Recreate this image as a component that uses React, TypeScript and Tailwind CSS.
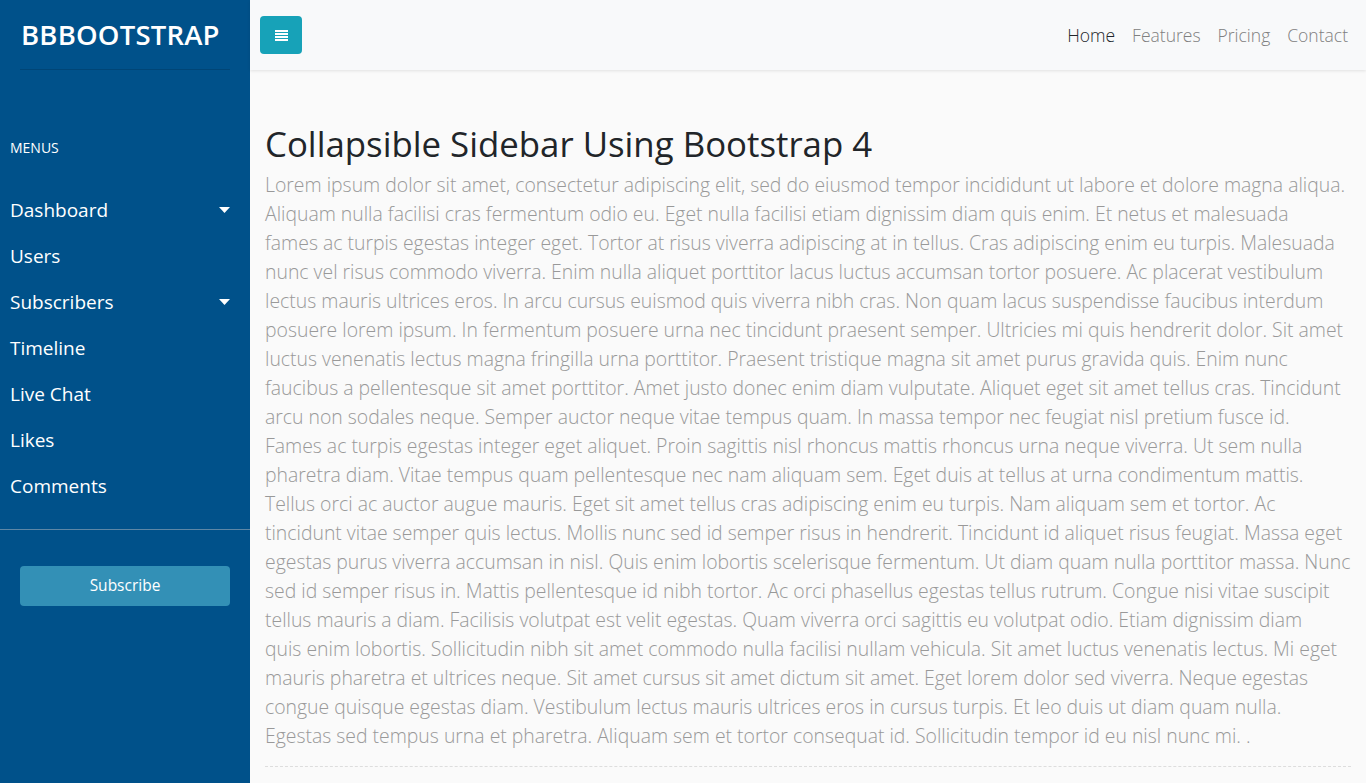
import React from "react";

const lines = [
  "Lorem ipsum dolor sit amet, consectetur adipiscing elit, sed do eiusmod tempor incididunt ut labore et dolore magna aliqua.",
  "Aliquam nulla facilisi cras fermentum odio eu. Eget nulla facilisi etiam dignissim diam quis enim. Et netus et malesuada",
  "fames ac turpis egestas integer eget. Tortor at risus viverra adipiscing at in tellus. Cras adipiscing enim eu turpis. Malesuada",
  "nunc vel risus commodo viverra. Enim nulla aliquet porttitor lacus luctus accumsan tortor posuere. Ac placerat vestibulum",
  "lectus mauris ultrices eros. In arcu cursus euismod quis viverra nibh cras. Non quam lacus suspendisse faucibus interdum",
  "posuere lorem ipsum. In fermentum posuere urna nec tincidunt praesent semper. Ultricies mi quis hendrerit dolor. Sit amet",
  "luctus venenatis lectus magna fringilla urna porttitor. Praesent tristique magna sit amet purus gravida quis. Enim nunc",
  "faucibus a pellentesque sit amet porttitor. Amet justo donec enim diam vulputate. Aliquet eget sit amet tellus cras. Tincidunt",
  "arcu non sodales neque. Semper auctor neque vitae tempus quam. In massa tempor nec feugiat nisl pretium fusce id.",
  "Fames ac turpis egestas integer eget aliquet. Proin sagittis nisl rhoncus mattis rhoncus urna neque viverra. Ut sem nulla",
  "pharetra diam. Vitae tempus quam pellentesque nec nam aliquam sem. Eget duis at tellus at urna condimentum mattis.",
  "Tellus orci ac auctor augue mauris. Eget sit amet tellus cras adipiscing enim eu turpis. Nam aliquam sem et tortor. Ac",
  "tincidunt vitae semper quis lectus. Mollis nunc sed id semper risus in hendrerit. Tincidunt id aliquet risus feugiat. Massa eget",
  "egestas purus viverra accumsan in nisl. Quis enim lobortis scelerisque fermentum. Ut diam quam nulla porttitor massa. Nunc",
  "sed id semper risus in. Mattis pellentesque id nibh tortor. Ac orci phasellus egestas tellus rutrum. Congue nisi vitae suscipit",
  "tellus mauris a diam. Facilisis volutpat est velit egestas. Quam viverra orci sagittis eu volutpat odio. Etiam dignissim diam",
  "quis enim lobortis. Sollicitudin nibh sit amet commodo nulla facilisi nullam vehicula. Sit amet luctus venenatis lectus. Mi eget",
  "mauris pharetra et ultrices neque. Sit amet cursus sit amet dictum sit amet. Eget lorem dolor sed viverra. Neque egestas",
  "congue quisque egestas diam. Vestibulum lectus mauris ultrices eros in cursus turpis. Et leo duis ut diam quam nulla.",
  "Egestas sed tempus urna et pharetra. Aliquam sem et tortor consequat id. Sollicitudin tempor id eu nisl nunc mi. .",
];

const menu: { label: string; caret?: boolean }[] = [
  { label: "Dashboard", caret: true },
  { label: "Users" },
  { label: "Subscribers", caret: true },
  { label: "Timeline" },
  { label: "Live Chat" },
  { label: "Likes" },
  { label: "Comments" },
];

function Caret() {
  return (
    <svg width="11" height="6" viewBox="0 0 11 6" className="fill-white">
      <polygon points="0,0 11,0 5.5,6" />
    </svg>
  );
}

export default function App() {
  return (
    <div
      className="flex h-[783px] w-[1366px] overflow-hidden bg-[#fafafa]"
      style={{ fontFamily: "'Open Sans', 'Noto Sans', sans-serif" }}
    >
      <nav className="flex w-[250px] shrink-0 flex-col bg-[#00518a] text-white">
        <div className="mx-[20px] flex h-[70px] items-center border-b border-[#004576] pl-[1px]">
          <span className="text-[27.5px] font-semibold tracking-[0.2px]">BBBOOTSTRAP</span>
        </div>
        <ul className="border-b border-[#5d87a6] pb-[20px] pt-[66px]">
          <li className="px-[10px] text-[14px] leading-[24px]">MENUS</li>
          <div className="h-[27px]" />
          {menu.map((m) => (
            <li
              key={m.label}
              className="flex h-[46px] items-center justify-between pl-[10px] pr-[20px] text-[19px]"
            >
              <span>{m.label}</span>
              {m.caret && <Caret />}
            </li>
          ))}
        </ul>
        <div className="px-[20px] pt-[36px]">
          <button className="h-[40px] w-full rounded-[4px] bg-[#3390b6] text-[15.5px] text-white">
            Subscribe
          </button>
        </div>
      </nav>
      <div className="flex min-w-0 flex-1 flex-col">
        <header className="flex h-[70px] shrink-0 items-center justify-between bg-[#f8f9fa] pl-[10px] pr-[18px] shadow-[0_1px_3px_rgba(0,0,0,0.1)]">
          <button className="flex h-[38px] w-[42px] items-center justify-center rounded-[4px] bg-[#17a2b8]">
            <svg width="13" height="11" viewBox="0 0 13 11" className="fill-white">
              <rect x="0" y="0" width="13" height="2" />
              <rect x="0" y="3" width="13" height="2" />
              <rect x="0" y="6" width="13" height="2" />
              <rect x="0" y="9" width="13" height="2" />
            </svg>
          </button>
          <div className="flex items-center gap-[17px] text-[17.5px] font-light">
            <span className="text-[#212529]">Home</span>
            <span className="text-[#808080]">Features</span>
            <span className="text-[#808080]">Pricing</span>
            <span className="text-[#808080]">Contact</span>
          </div>
        </header>
        <main className="px-[15px] pt-[54px]">
          <h2 className="text-[34.8px] font-medium leading-[40px] text-[#212529]">
            Collapsible Sidebar Using Bootstrap 4
          </h2>
          <div className="mt-[6px] text-[19.4px] font-light leading-[29px] text-[#999]">
            {lines.map((l, i) => (
              <div key={i} className="whitespace-nowrap">
                {l}
              </div>
            ))}
          </div>
          <div className="mt-[16px] border-b border-dashed border-[#ddd]" />
        </main>
      </div>
    </div>
  );
}
